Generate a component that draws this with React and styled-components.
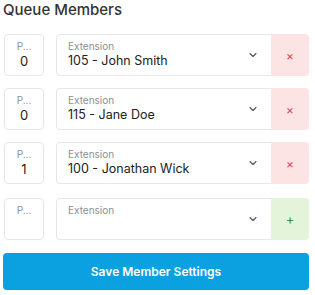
import React from 'react'
import styled, { createGlobalStyle } from 'styled-components'

const GlobalStyle = createGlobalStyle`
  body {
    margin: 0;
    background: #ffffff;
    font-family: 'Inter', 'Noto Sans', sans-serif;
  }
`

const members = [
  { priority: '0', ext: '105 - John Smith' },
  { priority: '0', ext: '115 - Jane Doe' },
  { priority: '1', ext: '100 - Jonathan Wick' },
]

function Chevron() {
  return (
    <svg width="12" height="12" viewBox="0 0 24 24" fill="none" stroke="#4b5563" strokeWidth="2.2" strokeLinecap="round" strokeLinejoin="round">
      <path d="M6 9l6 6 6-6" />
    </svg>
  )
}

function MemberRow({ priority, ext, isNew }) {
  return (
    <Row $new={isNew}>
      <PriorityBox>
        <SmallLabel>P...</SmallLabel>
        <PriorityValue>{priority}</PriorityValue>
      </PriorityBox>
      <ExtensionBox>
        <ExtText>
          <SmallLabel>Extension</SmallLabel>
          {ext && <ExtValue>{ext}</ExtValue>}
        </ExtText>
        <Chevron />
      </ExtensionBox>
      <ActionButton $add={isNew}>{isNew ? '+' : '×'}</ActionButton>
    </Row>
  )
}

function App() {
  return (
    <Wrapper>
      <GlobalStyle />
      <Heading>Queue Members</Heading>
      <List>
        {members.map((m, i) => (
          <MemberRow key={i} priority={m.priority} ext={m.ext} />
        ))}
        <MemberRow priority="" ext="" isNew />
      </List>
      <SaveButton>Save Member Settings</SaveButton>
    </Wrapper>
  )
}

const Wrapper = styled.div`
  width: 315px;
  padding: 0 6px 0 4px;
  box-sizing: border-box;
`

const Heading = styled.h2`
  margin: 0;
  padding-top: 1px;
  margin-left: -1px;
  font-size: 15px;
  font-weight: 500;
  color: #333;
  line-height: 18px;
`

const List = styled.div`
  display: flex;
  flex-direction: column;
  gap: 12px;
  margin-top: 15px;
`

const Row = styled.div`
  display: flex;
  height: 42px;
  margin-top: ${p => (p.$new ? '2px' : '0')};
`

const PriorityBox = styled.div`
  width: 40px;
  box-sizing: border-box;
  border: 1px solid #e5e7eb;
  border-radius: 4px;
  display: flex;
  flex-direction: column;
  align-items: center;
  padding-top: 5px;
  margin-right: 12px;
`

const SmallLabel = styled.span`
  font-size: 10px;
  line-height: 13px;
  color: #8a8f98;
`

const PriorityValue = styled.span`
  font-size: 13px;
  line-height: 16px;
  color: #222;
`

const ExtensionBox = styled.div`
  flex: 1;
  box-sizing: border-box;
  border: 1px solid #e5e7eb;
  border-right: none;
  border-radius: 4px 0 0 4px;
  display: flex;
  align-items: center;
  padding: 0 12px 0 11px;
`

const ExtText = styled.div`
  flex: 1;
  display: flex;
  flex-direction: column;
  align-self: flex-start;
  padding-top: 5px;
`

const ExtValue = styled.span`
  font-size: 12.5px;
  line-height: 16px;
  color: #222;
`

const ActionButton = styled.div`
  width: 38px;
  display: flex;
  align-items: center;
  justify-content: center;
  border-radius: 0 4px 4px 0;
  background: ${p => (p.$add ? '#e3f4da' : '#fde4e4')};
  color: ${p => (p.$add ? '#4d8a2f' : '#e0475a')};
  font-size: ${p => (p.$add ? '13px' : '12px')};
`

const SaveButton = styled.button`
  display: block;
  width: calc(100% + 1px);
  margin: 13px 0 0 -1px;
  height: 37px;
  border: none;
  border-radius: 4px;
  background: #0ba0e0;
  color: #fff;
  font-family: 'Inter', 'Noto Sans', sans-serif;
  font-size: 12px;
  font-weight: 600;
`

export default App
